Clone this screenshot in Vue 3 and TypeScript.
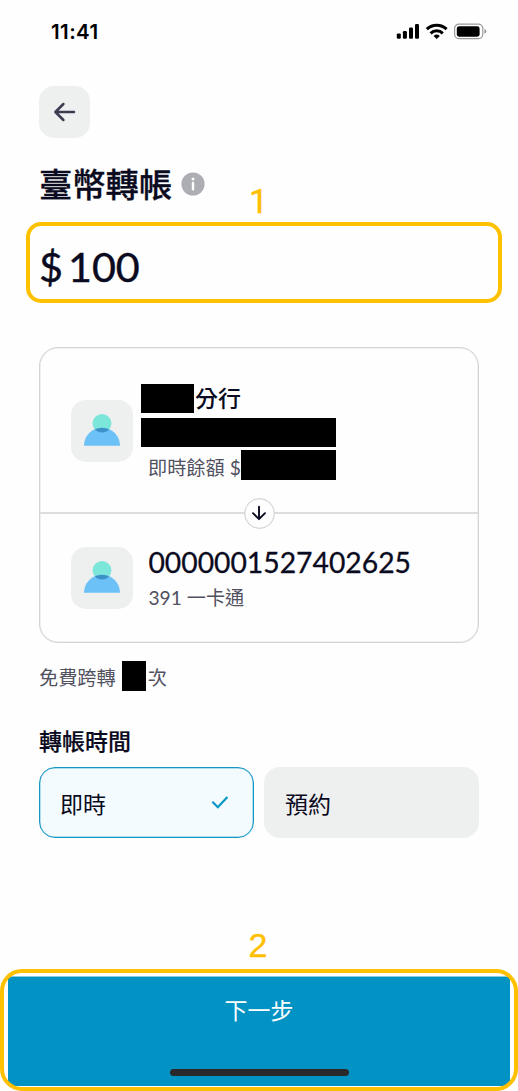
<script setup lang="ts">
import { ref } from 'vue'

type Timing = 'now' | 'scheduled'

const amount = 100
const timing = ref<Timing>('now')
const options: { id: Timing; label: string }[] = [
  { id: 'now', label: '即時' },
  { id: 'scheduled', label: '預約' },
]
</script>

<template>
  <div class="screen">
    <header class="status">
      <span class="clock">11:41</span>
      <svg class="indicators" width="92" height="18" viewBox="0 0 92 18">
        <rect x="0.8" y="10.4" width="4" height="5.4" rx="1.2" />
        <rect x="6.9" y="8" width="4" height="7.8" rx="1.2" />
        <rect x="13" y="4.6" width="4" height="11.2" rx="1.2" />
        <rect x="19" y="1" width="4" height="14.8" rx="1.2" />
        <g fill="none" stroke="#000" stroke-width="3">
          <path d="M30.8 6.2 A14.2 14.2 0 0 1 50.6 6.2" />
          <path d="M34.6 10.3 A8.8 8.8 0 0 1 46.8 10.3" />
        </g>
        <path d="M40.7 16 L37.6 12.9 A4.6 4.6 0 0 1 43.8 12.9 Z" />
        <rect x="58.6" y="1.1" width="28.2" height="14.6" rx="4.4" fill="none" stroke="#999" stroke-width="1.2" />
        <rect x="60.8" y="3.3" width="22.8" height="10.4" rx="2.4" />
        <path d="M88.4 6 Q90.4 7 90.4 8.4 Q90.4 9.8 88.4 10.8 Z" fill="#999" />
      </svg>
    </header>

    <main class="content">
      <button class="back" type="button" aria-label="返回">
        <svg width="24" height="24" viewBox="0 0 24 24">
          <path d="M21 12 H2.6 M10.4 4 L2.4 12 L10.4 20" />
        </svg>
      </button>

      <div class="heading">
        <h1>臺幣轉帳</h1>
        <svg width="24" height="24" viewBox="0 0 24 24">
          <circle cx="12" cy="12" r="11.6" fill="#acaeb4" />
          <circle cx="12" cy="7" r="1.5" fill="#fff" />
          <path d="M12 11 V17.2" stroke="#fff" stroke-width="2.4" stroke-linecap="round" />
        </svg>
      </div>

      <div class="amount"><span>$</span><span>{{ amount }}</span></div>

      <section class="card">
        <div class="party from">
          <div class="avatar">
            <svg width="38" height="34" viewBox="0 0 38 34">
              <circle cx="19" cy="10.3" r="9.4" fill="#7ce6da" />
              <path d="M1 32.7 A18 18 0 0 1 37 32.7 Z" fill="#6cc1f6" />
              <path d="M11.9 16.3 A18 18 0 0 1 26.1 16.3 A9.4 9.4 0 0 1 11.9 16.3 Z" fill="#3a92c9" />
            </svg>
          </div>
          <div class="details">
            <div class="branch"><i class="mask mask-branch"></i><span>分行</span></div>
            <i class="mask mask-number"></i>
            <div class="balance"><span>即時餘額 $</span><i class="mask mask-balance"></i></div>
          </div>
        </div>
        <div class="divider">
          <div class="arrow">
            <svg width="16" height="16" viewBox="0 0 16 16">
              <path d="M8 1.8 V14 M2 8.2 L8 14.2 L14 8.2" />
            </svg>
          </div>
        </div>
        <div class="party to">
          <div class="avatar">
            <svg width="38" height="34" viewBox="0 0 38 34">
              <circle cx="19" cy="10.3" r="9.4" fill="#7ce6da" />
              <path d="M1 32.7 A18 18 0 0 1 37 32.7 Z" fill="#6cc1f6" />
              <path d="M11.9 16.3 A18 18 0 0 1 26.1 16.3 A9.4 9.4 0 0 1 11.9 16.3 Z" fill="#3a92c9" />
            </svg>
          </div>
          <div class="recipient">
            <div class="account">0000001527402625</div>
            <div class="bank">391 一卡通</div>
          </div>
        </div>
      </section>

      <p class="quota"><span>免費跨轉</span><i class="mask mask-quota"></i><span>次</span></p>

      <h2>轉帳時間</h2>
      <div class="options">
        <button
          v-for="option in options"
          :key="option.id"
          type="button"
          class="option"
          :class="{ active: option.id === timing }"
          @click="timing = option.id"
        >
          <span>{{ option.label }}</span>
          <svg v-if="option.id === timing" width="18" height="14" viewBox="0 0 18 14">
            <path d="M1.4 5.8 L6.8 11.2 L16.4 1" />
          </svg>
        </button>
      </div>
    </main>

    <footer class="next">
      <span>下一步</span>
      <div class="home"></div>
    </footer>

    <div class="callout callout-amount"><b>1</b></div>
    <div class="callout callout-next"><b>2</b></div>
  </div>
</template>

<style>
body {
  background: #fff;
}
</style>

<style scoped>
.screen {
  position: relative;
  box-sizing: border-box;
  width: 518px;
  height: 1091px;
  padding-bottom: 5px;
  display: flex;
  flex-direction: column;
  overflow: hidden;
  background: #fefefe;
  color: #0a0a20;
  font-family: Lato, "Noto Sans CJK TC", sans-serif;
}
.status {
  box-sizing: border-box;
  height: 86px;
  padding: 20px 30px 0 51px;
  display: flex;
  justify-content: space-between;
  align-items: flex-start;
}
.clock {
  font: 600 20.5px/24px Inter, sans-serif;
  letter-spacing: 0.4px;
  color: #000;
}
.indicators {
  margin-top: 3px;
}
.content {
  padding: 0 39px;
  display: flex;
  flex-direction: column;
}
button {
  border: 0;
  padding: 0;
  font: inherit;
  color: inherit;
}
.back {
  width: 51px;
  height: 52px;
  border-radius: 15px;
  background: #eeefef;
  display: flex;
  align-items: center;
  justify-content: center;
}
.back svg path {
  fill: none;
  stroke: #3d3b50;
  stroke-width: 2.5;
  stroke-linecap: round;
  stroke-linejoin: round;
}
.heading {
  height: 48px;
  margin-top: 22px;
  display: flex;
  align-items: center;
  gap: 9px;
}
h1 {
  margin: 0;
  font-size: 33.3px;
  line-height: 50px;
  font-weight: 500;
  -webkit-text-stroke: 0.3px #0a0a20;
}
.amount {
  height: 60px;
  margin-top: 28px;
  display: flex;
  gap: 5px;
  font-size: 41.3px;
  line-height: 60px;
  -webkit-text-stroke: 0.4px #0a0a20;
}
.card {
  box-sizing: border-box;
  width: 440px;
  height: 296px;
  margin-top: 51px;
  border: 1px solid #d2d3d4;
  box-shadow: inset 0 0 0 0.5px #e2e3e3;
  border-radius: 19px;
  display: flex;
  flex-direction: column;
}
.party {
  display: flex;
  padding-left: 31px;
}
.from {
  height: 164px;
}
.avatar {
  width: 62px;
  height: 62px;
  border-radius: 15px;
  background: #eeefef;
  display: flex;
  align-items: center;
  justify-content: center;
}
.from .avatar {
  margin-top: 52px;
}
.avatar svg {
  margin-bottom: 3px;
}
.mask {
  display: block;
  background: #000;
}
.details {
  margin: 36px 0 0 8px;
  display: flex;
  flex-direction: column;
}
.branch {
  display: flex;
  height: 29px;
  font-size: 23px;
  line-height: 29px;
  font-weight: 500;
}
.branch span {
  margin-left: 1px;
}
.mask-branch {
  width: 53px;
  height: 29px;
}
.mask-number {
  width: 195px;
  height: 29px;
  margin-top: 5px;
}
.balance {
  display: flex;
  height: 30px;
  margin-top: 3px;
  padding-left: 7px;
  font-size: 19.2px;
  line-height: 35px;
  color: #51515f;
}
.mask-balance {
  width: 95px;
  height: 30px;
}
.divider {
  height: 2px;
  background: #dcdddd;
  display: flex;
  align-items: center;
  justify-content: center;
}
.arrow {
  flex: none;
  box-sizing: border-box;
  width: 31px;
  height: 31px;
  border: 1px solid #d2d3d4;
  box-shadow: inset 0 0 0 0.5px #e2e3e3;
  border-radius: 50%;
  background: #fefefe;
  display: flex;
  align-items: center;
  justify-content: center;
}
.arrow path {
  fill: none;
  stroke: #0a0a20;
  stroke-width: 1.9;
  stroke-linecap: round;
  stroke-linejoin: round;
}
.to .avatar {
  margin-top: 33px;
}
.recipient {
  margin: 30px 0 0 15.4px;
}
.account {
  font-size: 28.3px;
  line-height: 36px;
  -webkit-text-stroke: 0.3px #0a0a20;
}
.bank {
  font-size: 19.2px;
  line-height: 30px;
  margin-top: 3px;
  color: #51515f;
}
.quota {
  margin: 18px 0 0;
  height: 30px;
  display: flex;
  font-size: 19.2px;
  line-height: 34px;
  color: #51515f;
}
.mask-quota {
  width: 24px;
  height: 30px;
  margin: 0 2px 0 6px;
}
h2 {
  margin: 34px 0 0;
  font-size: 23px;
  line-height: 32px;
  font-weight: 500;
  -webkit-text-stroke: 0.2px #0a0a20;
}
.options {
  margin-top: 10px;
  display: grid;
  grid-template-columns: 215px 215px;
  gap: 10px;
}
.option {
  box-sizing: border-box;
  height: 71px;
  padding: 0 25px 0 21px;
  border-radius: 16px;
  background: #eeefef;
  display: flex;
  align-items: center;
  justify-content: space-between;
  font-size: 23px;
  line-height: 36px;
}
.option span {
  padding-top: 2px;
}
.option.active {
  padding: 0 24px 0 20px;
  border: 1px solid #1597c3;
  box-shadow: inset 0 0 0 0.5px #6fc0dc;
  background: #f3fbff;
}
.option path {
  fill: none;
  stroke: #0a95c4;
  stroke-width: 2.2;
}
.next {
  box-sizing: border-box;
  height: 110px;
  margin: auto 8px 0;
  padding: 15px 0 10px;
  border-top: 1px solid #8accdf;
  background: #0292c3;
  color: #fff;
  display: flex;
  flex-direction: column;
  align-items: center;
  justify-content: space-between;
  font-size: 23px;
  line-height: 36px;
}
.home {
  width: 179px;
  height: 7px;
  border-radius: 3.5px;
  background: #29282a;
}
.callout {
  position: absolute;
  box-sizing: border-box;
  border: 4px solid #ffc000;
  color: #ffc000;
}
.callout b {
  position: absolute;
  font: 400 34px/34px "Liberation Sans", Arial, sans-serif;
  -webkit-text-stroke: 0.4px #ffc000;
}
.callout-amount {
  left: 26px;
  top: 222px;
  width: 476px;
  height: 81px;
  border-radius: 15px;
}
.callout-amount b {
  left: 219px;
  top: -42px;
  font-family: Roboto, Arial, sans-serif;
}
.callout-next {
  left: 0;
  top: 969px;
  width: 518px;
  height: 122px;
  border-radius: 22px;
}
.callout-next b {
  left: 244.5px;
  top: -45px;
}
</style>
